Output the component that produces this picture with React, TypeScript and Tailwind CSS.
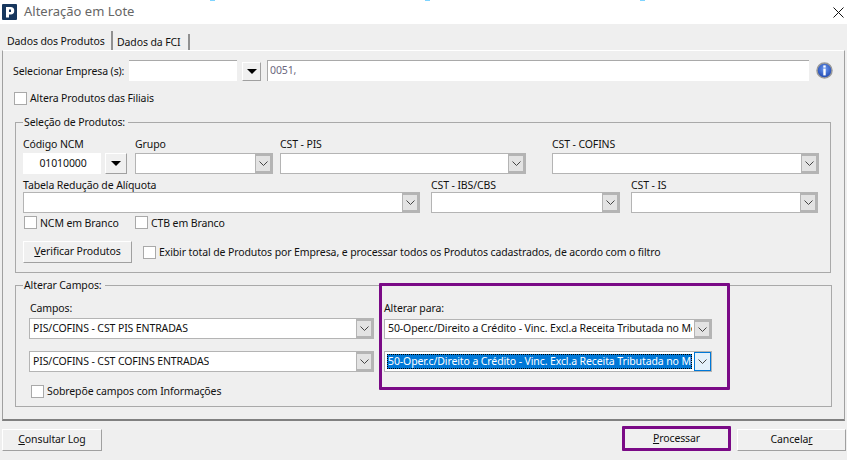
import type { ReactNode } from 'react'

const OPTION = '50-Oper.c/Direito a Crédito - Vinc. Excl.a Receita Tributada no Mercado Interno'

function Chevron() {
  return (
    <svg width="9" height="5" viewBox="0 0 9 5" fill="none" stroke="#444" strokeWidth="1">
      <path d="M.5.5 4.5 4.5 8.5.5" />
    </svg>
  )
}

function Combo({
  width,
  value,
  height = 'h-[21px]',
  focused = false,
}: {
  width: string
  value?: string
  height?: string
  focused?: boolean
}) {
  return (
    <div className={`flex ${width} ${height} shrink-0 border border-[#b4b4b4] bg-white`}>
      <div className="flex min-w-0 flex-1 items-center overflow-hidden whitespace-nowrap p-[2px]">
        {focused ? (
          <span className="flex h-full w-full items-center overflow-hidden bg-[#0078d7] pl-[1px] text-white outline-1 outline-dotted outline-black -outline-offset-1">
            {value}
          </span>
        ) : (
          <span className="overflow-hidden pl-[1px]">{value}</span>
        )}
      </div>
      <div
        className={
          focused
            ? 'flex w-[17px] items-center justify-center border border-[#0078d7] bg-[#e5f1fb]'
            : 'flex w-[17px] items-center justify-center border-2 border-l border-[#b4b4b4] bg-[#e3e3e3]'
        }
      >
        <Chevron />
      </div>
    </div>
  )
}

function Check({ label, className = '' }: { label: string; className?: string }) {
  return (
    <div className={`flex items-center gap-[3px] ${className}`}>
      <span className="h-[13px] w-[13px] shrink-0 border border-[#a9a9a9] bg-white" />
      <span className="whitespace-nowrap leading-[14px]">{label}</span>
    </div>
  )
}

function Field({ label, className = '', children }: { label: string; className?: string; children: ReactNode }) {
  return (
    <div className={`flex flex-col ${className}`}>
      <span className="h-[16px] whitespace-nowrap leading-[14px]">{label}</span>
      {children}
    </div>
  )
}

function ArrowButton({ className }: { className: string }) {
  return (
    <div className={`flex items-center justify-center border border-b-[#a0a0a0] border-l-white border-r-[#a0a0a0] border-t-white bg-[#f0f0f0] ${className}`}>
      <span className="h-0 w-0 border-x-[5px] border-t-[5px] border-x-transparent border-t-black" />
    </div>
  )
}

function ActionButton({ children, className }: { children: ReactNode; className: string }) {
  return (
    <div className={`flex items-center justify-center border border-b-[#a0a0a0] border-l-white border-r-[#a0a0a0] border-t-white bg-[#f0f0f0] ${className}`}>
      {children}
    </div>
  )
}

function GroupBox({ title, className, children }: { title: string; className: string; children: ReactNode }) {
  return (
    <div className={`relative border border-[#a9a9a9] ${className}`}>
      <span className="absolute -top-[8px] left-[7px] bg-[#efefef] px-[1px] pr-[3px] leading-[14px]">{title}</span>
      {children}
    </div>
  )
}

function Logo() {
  return (
    <svg width="15" height="16" viewBox="0 0 15 16">
      <rect width="15" height="16" rx="1" fill="#17375e" />
      <path d="M4 3h4.500a3.500 3.500 0 0 1 0 7.500H7V13.500H4z" fill="#fff" />
      <rect x="7" y="5.500" width="2" height="2.500" fill="#17375e" />
    </svg>
  )
}

function InfoIcon() {
  return (
    <svg width="17" height="17" viewBox="0 0 17 17">
      <defs>
        <radialGradient id="info" cx="50%" cy="40%" r="60%">
          <stop offset="0" stopColor="#6f9bf0" />
          <stop offset="1" stopColor="#1c45b0" />
        </radialGradient>
      </defs>
      <circle cx="8.500" cy="8.500" r="7.500" fill="url(#info)" stroke="#9a9a9a" strokeWidth="1.500" />
      <rect x="7.300" y="3.400" width="2.400" height="2.200" fill="#fff" />
      <rect x="7.300" y="6.600" width="2.400" height="6.800" fill="#fff" />
    </svg>
  )
}

export default function App() {
  return (
    <div className="flex h-[460px] w-[847px] flex-col overflow-hidden bg-[#efefef] font-['Noto_Sans',sans-serif] text-[10.5px] tracking-[-0.11px] text-[#111]">
      {/* title bar */}
      <div className="relative flex h-[24px] shrink-0 items-center bg-white pl-[2px]">
        <span className="absolute left-[210px] top-0 h-[1px] w-[5px] bg-[#7fd4ff]" />
        <span className="absolute left-[425px] top-0 h-[1px] w-[5px] bg-[#7fd4ff]" />
        <span className="absolute left-[640px] top-0 h-[1px] w-[5px] bg-[#7fd4ff]" />
        <Logo />
        <span className="ml-[7px] text-[13px] tracking-normal text-[#666]">Alteração em Lote</span>
        <svg className="ml-auto mr-[3px]" width="11" height="11" viewBox="0 0 11 11" stroke="#111" strokeWidth="1">
          <path d="M.5.500 10.500 10.500M10.500.500.500 10.500" />
        </svg>
      </div>

      {/* tabs */}
      <div className="flex h-[26px] shrink-0 items-end pl-[3px]">
        <div className="flex h-[19px] w-[110px] items-center whitespace-nowrap border-r-2 border-[#909090] pl-[4px] leading-[14px]">
          Dados dos Produtos
        </div>
        <div className="flex h-[16px] w-[77px] items-center whitespace-nowrap border-r-2 border-[#909090] pl-[4px] leading-[14px]">
          Dados da FCI
        </div>
      </div>

      {/* tab page */}
      <div className="mx-[2px] flex h-[371px] shrink-0 flex-col border-x border-b-2 border-t border-x-[#a0a0a0] border-b-[#808080] border-t-white pl-[12px] pt-[9px]">
        <div className="flex h-[21px] items-center">
          <span className="-ml-[2px] w-[116px] whitespace-nowrap leading-[14px]">Selecionar Empresa (s):</span>
          <div className="h-[21px] w-[108px] border-t border-[#a9a9a9] bg-white" />
          <ArrowButton className="ml-[5px] mt-[2px] h-[19px] w-[19px]" />
          <div className="ml-[6px] flex h-[21px] w-[542px] items-center border-l border-t border-[#a9a9a9] bg-white pl-[2px] text-[#6c6880]">
            0051,
          </div>
          <div className="ml-[7px]">
            <InfoIcon />
          </div>
        </div>

        <Check label="Altera Produtos das Filiais" className="ml-[-1px] mt-[10px]" />

        <GroupBox title="Seleção de Produtos:" className="mt-[17px] ml-0 h-[151px] w-[816px] pl-[7px] pt-[14px]">
          <div className="flex h-[37px]">
            <Field label="Código NCM" className="w-[82px]">
              <div className="flex h-[21px] w-[78px] items-center justify-center bg-white pl-[2px]">01010000</div>
            </Field>
            <ArrowButton className="mt-[16px] h-[21px] w-[22px]" />
            <Field label="Grupo" className="ml-[8px]">
              <Combo width="w-[138px]" />
            </Field>
            <Field label="CST - PIS" className="ml-[7px]">
              <Combo width="w-[246px]" />
            </Field>
            <Field label="CST - COFINS" className="ml-[26px]">
              <Combo width="w-[267px]" />
            </Field>
          </div>
          <div className="mt-[4px] flex">
            <Field label="Tabela Redução de Alíquota" className="h-[35px] w-[397px]">
              <div className="-mt-[2px]">
                <Combo width="w-[397px]" />
              </div>
            </Field>
            <Field label="CST - IBS/CBS" className="ml-[11px] h-[35px]">
              <div className="-mt-[2px]">
                <Combo width="w-[189px]" />
              </div>
            </Field>
            <Field label="CST - IS" className="ml-[11px] h-[35px]">
              <div className="-mt-[2px]">
                <Combo width="w-[187px]" />
              </div>
            </Field>
          </div>
          <div className="mt-[3px] flex h-[13px]">
            <Check label="NCM em Branco" className="ml-[1px] w-[111px]" />
            <Check label="CTB em Branco" />
          </div>
          <div className="mt-[12px] flex h-[22px] items-center">
            <ActionButton className="h-[22px] w-[109px]">
              <span>
                <span className="underline">V</span>erificar Produtos
              </span>
            </ActionButton>
            <Check label="Exibir total de Produtos por Empresa, e processar todos os Produtos cadastrados, de acordo com o filtro" className="ml-[11px]" />
          </div>
        </GroupBox>

        <GroupBox title="Alterar Campos:" className="mt-[12px] h-[122px] w-[817px]">
          <div className="flex pl-[13px] pt-[15px]">
            <div className="flex w-[355px] flex-col">
              <span className="ml-[1px] h-[17px] leading-[14px]">Campos:</span>
              <Combo width="w-[345px]" value="PIS/COFINS - CST PIS ENTRADAS" />
              <div className="mt-[12px]">
                <Combo width="w-[345px]" value="PIS/COFINS - CST COFINS ENTRADAS" />
              </div>
              <Check label="Sobrepõe campos com Informações" className="ml-[2px] mt-[12px]" />
            </div>
            <div className="flex flex-col">
              <span className="h-[18px] leading-[14px]">Alterar para:</span>
              <Combo width="w-[328px]" height="h-[20px]" value={OPTION} />
              <div className="mt-[12px]">
                <Combo width="w-[328px]" value={OPTION} focused />
              </div>
            </div>
          </div>
          <div className="absolute left-[363px] -top-[3px] h-[107px] w-[351px] rounded-[1px] border-[3px] border-[#7a0a86]" />
        </GroupBox>
      </div>

      {/* footer */}
      <div className="flex items-start pl-[2px] pt-[8px]">
        <ActionButton className="h-[22px] w-[100px]">
          <span>
            <span className="underline">C</span>onsultar Log
          </span>
        </ActionButton>
        <div className="relative ml-auto mr-[6px] -mt-[3px] flex h-[25px] w-[109px] items-center justify-center rounded-[1px] border-[3px] border-[#7a0a86] bg-[#f0f0f0]">
          <span>
            <span className="underline">P</span>rocessar
          </span>
        </div>
        <ActionButton className="mr-[1px] h-[22px] w-[109px]">
          <span>
            Cancela<span className="underline">r</span>
          </span>
        </ActionButton>
      </div>
    </div>
  )
}
